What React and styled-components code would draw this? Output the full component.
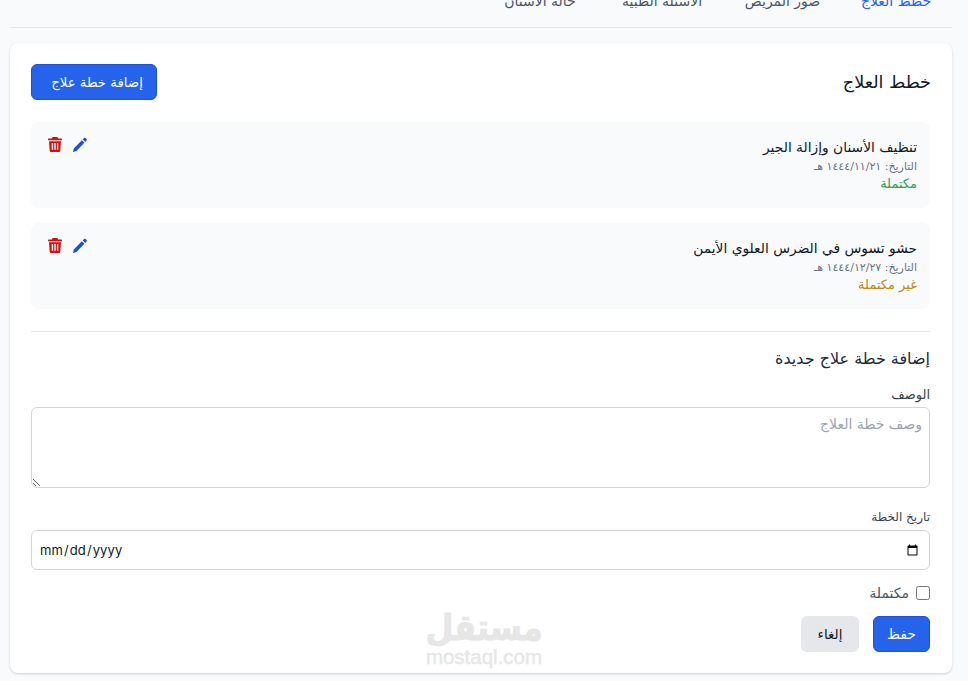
import React from "react";
import styled, { createGlobalStyle } from "styled-components";

const Global = createGlobalStyle`
  html, body { margin: 0; padding: 0; background: #f9fafb; overflow: hidden; height: 681px; }
  body { font-family: "DejaVu Sans", "Noto Sans", sans-serif; color: #111827; }
  * { box-sizing: border-box; }
`;
const Page = styled.div`
  width: 968px; height: 681px; padding: 0 16px 0 10px; overflow: hidden; position: relative;
`;
const Tabs = styled.nav`
  display: flex; height: 28px; border-bottom: 1px solid #e5e7eb; overflow: hidden;
`;
const Tab = styled.div`
  width: ${p => p.$w}px; height: 28px; margin-bottom: -1px; display: flex; justify-content: center; align-items: flex-end;
  padding-bottom: 16px; font-size: 14px; line-height: 20px; white-space: nowrap;
  color: ${p => (p.$active ? "#2563eb" : "#4b5563")};
  border-bottom: ${p => (p.$active ? "1px solid #2563eb" : "1px solid transparent")};
`;
const Card = styled.main`
  position: relative; margin-top: 15px; height: 630px; background: #fff; border-radius: 8px; padding: 21px 22px 21px 21px;
  box-shadow: 0 1px 3px rgba(0,0,0,.12), 0 1px 2px rgba(0,0,0,.06);
`;
const Head = styled.header`
  display: flex; justify-content: space-between; align-items: center; height: 36px; margin-bottom: 22px;
`;
const Title = styled.h2`margin: 0 -1px 0 0; font-size: 17.6px; font-weight: 400; color: #111827;`;
const PrimaryButton = styled.button`
  background: #2563eb; color: #fff; border-radius: 6px; font: inherit; font-size: ${p => p.$fs}px;
  height: 36px; padding: 0 0 0 ${p => p.$pl || 0}px; width: ${p => p.$w}px; border: 1px solid #1d4ed8;
`;
const Plan = styled.article`
  display: flex; justify-content: space-between; align-items: flex-start; height: 86px; margin-bottom: 15px;
  background: #f9fafb; border-radius: 8px; padding: 14px 13px 0 17px;
`;
const PlanText = styled.div`display: flex; flex-direction: column;`;
const PlanName = styled.div`font-size: 13.8px; line-height: 22px; color: #111827;`;
const PlanDate = styled.div`font-size: 11px; line-height: 18px; color: #6b7280;`;
const PlanState = styled.div`font-size: 13px; line-height: 16px; color: ${p => p.$c};`;
const Actions = styled.div`display: flex; gap: 11px; align-items: center; margin-top: 1px;`;
const Icon = styled.svg`display: block; width: ${p => p.$w}px; height: 15px; fill: ${p => p.$c};`;
const Rule = styled.hr`border: 0; border-top: 1px solid #e5e7eb; margin: 22px 0 0;`;
const FormTitle = styled.h3`margin: 16px 0 0; font-size: 16px; line-height: 22px; font-weight: 400; color: #1f2937;`;
const Label = styled.label`display: block; font-size: ${p => p.$fs}px; line-height: 16px; color: #374151; margin-bottom: ${p => p.$mb}px;`;
const Field = styled.div`margin-top: ${p => p.$mt}px;`;
const Area = styled.textarea`
  display: block; width: 100%; height: 81px; border: 1px solid #d1d5db; border-radius: 6px; padding: 8px 7px 8px 8px; font: inherit; font-size: 14px;
  background: #fff; outline: 0;
  &::placeholder { color: #9ca3af; }
`;
const DateInput = styled.input`
  display: block; width: 100%; height: 40px; border: 1px solid #d1d5db; border-radius: 6px; padding: 0 8px 0 7px; background: #fff;
  font-family: "Inter", "Liberation Sans", sans-serif; font-size: 13px; letter-spacing: .1px; color: #111827;
`;
const CheckRow = styled.label`display: flex; align-items: center; gap: 7px; margin-top: 15px; font-size: 14px; color: #4b5563; height: 16px;`;
const Check = styled.input`width: 14px; height: 14px; margin: 0;`;
const Buttons = styled.div`display: flex; gap: 14px; margin-top: 15px;`;
const GhostButton = styled.button`
  border: 0; background: #e5e7eb; color: #111827; border-radius: 6px; font: inherit; font-size: 13.5px; height: 36px; width: 58px; padding: 0;
`;
const Watermark = styled.div`
  position: absolute; left: 415px; top: 569px; width: 118px; text-align: center; color: #e6e6e6; pointer-events: none;
`;
const MarkWord = styled.div`
  font-size: 32px; font-weight: 700; line-height: 37px; -webkit-text-stroke: 1px #e6e6e6; white-space: nowrap;
  transform: scaleY(1.12); transform-origin: 50% 100%;
`;
const MarkUrl = styled.div`
  display: flex; justify-content: center; font-family: "Liberation Sans", sans-serif; font-size: 20.5px; -webkit-text-stroke: .4px #e6e6e6;
  line-height: 16px; direction: ltr; white-space: nowrap; margin-left: -2px; margin-right: -2px;
`;

const TrashIcon = () => (
  <Icon $w={14} $c="#d40f0f" viewBox="0 0 14 15">
    <path fillRule="evenodd" d="M4.6 0h4.8l.7 1.6H13.4c.4 0 .6.3.6.6v1.1H0V2.2c0-.3.2-.6.6-.6h3.3zM1 4.2h12l-.7 9.5c-.1.8-.6 1.3-1.4 1.3H3.1c-.8 0-1.3-.5-1.4-1.3zm2.7 1.7v6.8h1.4V5.900zm2.600 0v6.800h1.400V5.900zm2.600 0v6.800h1.400V5.900z" />
  </Icon>
);
const PenIcon = () => (
  <Icon $w={14} $c="#1d4ed8" viewBox="0 0 14 15">
    <path d="M0 15l.8-3.400L8.900 3.300l2.500 2.500L3.400 14.100zM9.800 2.400l1.200-1.300c.5-.5 1.200-.5 1.700 0l.8.800c.5.500.5 1.200 0 1.700l-1.200 1.300z" />
  </Icon>
);

const plans = [
  { name: "تنظيف الأسنان وإزالة الجير", date: "التاريخ: ١٤٤٤/١١/٢١ هـ", state: "مكتملة", c: "#2f9e56" },
  { name: "حشو تسوس في الضرس العلوي الأيمن", date: "التاريخ: ١٤٤٤/١٢/٢٧ هـ", state: "غير مكتملة", c: "#b98a12" },
];

export default function App() {
  return (
    <Page dir="rtl">
      <Global />
      <Tabs>
        <Tab $w={112} $active>خطط العلاج</Tab>
        <Tab $w={115}>صور المريض</Tab>
        <Tab $w={126}>الأسئلة الطبية</Tab>
        <Tab $w={118}>حالة الأسنان</Tab>
      </Tabs>
      <Card>
        <Head>
          <Title>خطط العلاج</Title>
          <PrimaryButton $w={126} $fs={13.3} $pl={6}>إضافة خطة علاج</PrimaryButton>
        </Head>
        {plans.map(p => (
          <Plan key={p.name}>
            <PlanText>
              <PlanName>{p.name}</PlanName>
              <PlanDate>{p.date}</PlanDate>
              <PlanState $c={p.c}>{p.state}</PlanState>
            </PlanText>
            <Actions>
              <PenIcon />
              <TrashIcon />
            </Actions>
          </Plan>
        ))}
        <Rule />
        <FormTitle>إضافة خطة علاج جديدة</FormTitle>
        <Field $mt={17}>
          <Label $fs={13} $mb={4}>الوصف</Label>
          <Area placeholder="وصف خطة العلاج" />
        </Field>
        <Field $mt={21}>
          <Label $fs={12} $mb={5}>تاريخ الخطة</Label>
          <DateInput type="date" dir="ltr" />
        </Field>
        <CheckRow><Check type="checkbox" />مكتملة</CheckRow>
        <Buttons>
          <PrimaryButton $w={57} $fs={14}>حفظ</PrimaryButton>
          <GhostButton>إلغاء</GhostButton>
        </Buttons>
        <Watermark>
          <MarkWord>مستقل</MarkWord>
          <MarkUrl>mostaql.com</MarkUrl>
        </Watermark>
      </Card>
    </Page>
  );
}
